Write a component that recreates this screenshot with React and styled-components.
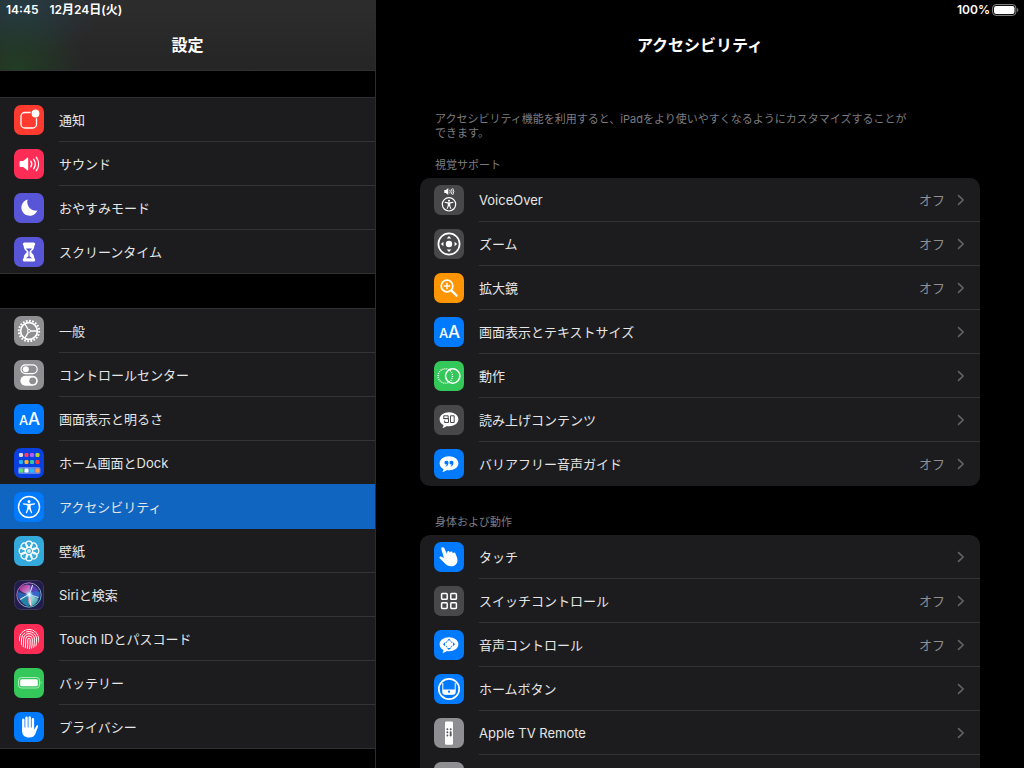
import React from 'react';
import styled, { createGlobalStyle } from 'styled-components';

const SIDEBAR_GROUPS = [
    [
        { id: 'notifications', label: '通知', icon: 'notifications' },
        { id: 'sounds', label: 'サウンド', icon: 'sounds' },
        { id: 'dnd', label: 'おやすみモード', icon: 'moon' },
        { id: 'screentime', label: 'スクリーンタイム', icon: 'hourglass' },
    ],
    [
        { id: 'general', label: '一般', icon: 'gear' },
        { id: 'control-center', label: 'コントロールセンター', icon: 'toggles' },
        { id: 'display', label: '画面表示と明るさ', icon: 'textSize' },
        { id: 'home', label: 'ホーム画面とDock', icon: 'dock' },
        { id: 'accessibility', label: 'アクセシビリティ', icon: 'accessibility' },
        { id: 'wallpaper', label: '壁紙', icon: 'wallpaper' },
        { id: 'siri', label: 'Siriと検索', icon: 'siri' },
        { id: 'touchid', label: 'Touch IDとパスコード', icon: 'fingerprint' },
        { id: 'battery', label: 'バッテリー', icon: 'battery' },
        { id: 'privacy', label: 'プライバシー', icon: 'hand' },
    ],
];

const SECTIONS = [
    {
        title: '視覚サポート',
        items: [
            { id: 'voiceover', label: 'VoiceOver', icon: 'voiceOver', value: 'オフ' },
            { id: 'zoom', label: 'ズーム', icon: 'zoom', value: 'オフ' },
            { id: 'magnifier', label: '拡大鏡', icon: 'magnifier', value: 'オフ' },
            { id: 'text-size', label: '画面表示とテキストサイズ', icon: 'textSize' },
            { id: 'motion', label: '動作', icon: 'motion' },
            { id: 'spoken', label: '読み上げコンテンツ', icon: 'spoken' },
            { id: 'audio-desc', label: 'バリアフリー音声ガイド', icon: 'quote', value: 'オフ' },
        ],
    },
    {
        title: '身体および動作',
        items: [
            { id: 'touch', label: 'タッチ', icon: 'touch' },
            { id: 'switch-control', label: 'スイッチコントロール', icon: 'switches', value: 'オフ' },
            { id: 'voice-control', label: '音声コントロール', icon: 'voiceControl', value: 'オフ' },
            { id: 'home-button', label: 'ホームボタン', icon: 'homeButton' },
            { id: 'tv-remote', label: 'Apple TV Remote', icon: 'remote' },
            { id: 'more', icon: 'more' },
        ],
    },
];

const ICON_COLORS = {
    notifications: '#ff3b30',
    sounds: '#ff2d55',
    moon: '#5856d6',
    hourglass: '#5856d6',
    gear: '#8e8e93',
    toggles: '#8e8e93',
    textSize: '#007aff',
    dock: '#0a3fe0',
    accessibility: '#007aff',
    wallpaper: '#34aadc',
    siri: '#211c4c',
    fingerprint: '#ff2d55',
    battery: '#34c759',
    hand: '#007aff',
    voiceOver: '#48484a',
    zoom: '#48484a',
    magnifier: '#ff9500',
    motion: '#34c759',
    spoken: '#48484a',
    quote: '#007aff',
    touch: '#007aff',
    switches: '#48484a',
    voiceControl: '#007aff',
    homeButton: '#007aff',
    remote: '#8e8e93',
    more: '#8e8e93',
};

const DOCK_ROWS = [
    { y: 7, colors: ['#d8d8e0', '#ff3b62', '#b65cf0', '#b4d62c'] },
    { y: 14, colors: ['#22b4f2', '#ffb224', '#35c8a2', '#ff3b30'] },
    { y: 22.6, colors: ['#5ce468', '#ffffff', '#22bdf5', '#ff9a3c'] },
];

const PERSON =
    'M15 8.1a1.5 1.5 0 1 0 0 3 1.5 1.5 0 0 0 0-3z' +
    'M9.3 11.2c-.7.1-.7 1.1 0 1.3l3.6.8c.4.1.5.3.5.8 0 2-.5 3.9-1.5 6.3-.3.8.7 1.2 1.1.5l2-4.2 2 4.2c.4.7 1.4.3 1.1-.5-1-2.4-1.5-4.3-1.5-6.3 0-.5.1-.7.5-.8l3.6-.8c.7-.2.7-1.2 0-1.3l-4 .5h-3.4z';

const BUBBLE =
    'M15 7.3c5.3 0 9.4 3 9.4 7s-4.1 7-9.4 7c-.8 0-1.5-.1-2.2-.2-1.1 1-2.6 1.8-4.4 2 .7-.8 1.1-1.9 1-3C7 18.9 5.6 16.8 5.6 14.3c0-4 4.1-7 9.4-7z';

const GLYPHS = {
    notifications: (
        <>
            <rect x="7" y="7.5" width="15.5" height="15.5" rx="3.8" fill="none" stroke="#fff" strokeWidth="1.3" />
            <circle cx="21.5" cy="8.5" r="5" fill="#ff3b30" />
            <circle cx="21.5" cy="8.5" r="3.9" fill="#fff" />
        </>
    ),
    sounds: (
        <>
            <path d="M6.5 12h2.7l4-3.2c.5-.4 1-.1 1 .5v11.4c0 .6-.5.9-1 .5l-4-3.2H6.5a1 1 0 0 1-1-1v-4a1 1 0 0 1 1-1z" fill="#fff" />
            <path d="M16.8 12.2a5 5 0 0 1 0 5.6M19.6 10.2a8.3 8.3 0 0 1 0 9.6M22.4 8.3a11.6 11.6 0 0 1 0 13.4" fill="none" stroke="#fff" strokeWidth="1.3" strokeLinecap="round" />
        </>
    ),
    moon: <path d="M13.7 6.4A8.3 8.3 0 1 0 23.4 17.5 8.6 8.6 0 0 1 13.7 6.4z" fill="#fff" />,
    hourglass: (
        <>
            <path d="M10.4 5.4h9.2a1.6 1.6 0 0 1 1.6 1.6c0 1-.5 1.4-.9 1.7 0 3-1.3 4.3-2.7 5.6-.5.5-.5.9 0 1.4 1.4 1.3 2.7 2.6 2.7 5.6.4.3.9.7.9 1.7a1.6 1.6 0 0 1-1.6 1.6h-9.2A1.6 1.6 0 0 1 8.8 23c0-1 .5-1.4.9-1.7 0-3 1.3-4.3 2.7-5.6.5-.5.5-.9 0-1.4-1.4-1.3-2.7-2.6-2.7-5.6-.4-.3-.9-.7-.9-1.7a1.6 1.6 0 0 1 1.6-1.6z" fill="#fff" />
            <path d="M12 11.6h6c-.6 1.2-1.7 1.8-2.5 2.8v4.8l2.7 2h-6.4l2.7-2v-4.8c-.8-1-1.9-1.6-2.5-2.8z" fill="#5856d6" />
        </>
    ),
    gear: (
        <g fill="none" stroke="#fff">
            <circle cx="15" cy="15" r="8.4" strokeWidth="1.7" />
            <circle cx="15" cy="15" r="10.2" strokeWidth="2" pathLength="40" strokeDasharray="1.1 .9" />
            <path d="M16.6 15h6.6M14.2 13.6 11 8M14.2 16.4 11 22" strokeWidth="1.3" />
            <circle cx="15" cy="15" r="1.5" strokeWidth="1" />
        </g>
    ),
    toggles: (
        <>
            <rect x="7" y="4.8" width="16.2" height="8.8" rx="4.4" fill="none" stroke="#fff" strokeWidth="1.2" />
            <circle cx="11.8" cy="9.2" r="3" fill="#fff" />
            <rect x="6.4" y="15.8" width="17.4" height="10" rx="5" fill="#fff" />
            <circle cx="18.7" cy="20.8" r="3.4" fill="#8e8e93" />
        </>
    ),
    textSize: (
        <g fontFamily="Inter" fontWeight="500" fill="#fff">
            <text x="5" y="21" fontSize="13">A</text>
            <text x="14" y="21" fontSize="17">A</text>
        </g>
    ),
    dock: (
        <>
            <rect x="4" y="19" width="22.5" height="7" rx="1.8" fill="#fff" fillOpacity=".35" />
            {DOCK_ROWS.map(row =>
                row.colors.map((color, i) => (
                    <rect key={color} x={5 + i * 5.5} y={row.y - 2} width="4" height="4" rx="1.2" fill={color} />
                ))
            )}
        </>
    ),
    accessibility: (
        <>
            <circle cx="15" cy="15" r="10.5" fill="none" stroke="#fff" strokeWidth="1.5" />
            <path d={PERSON} fill="#fff" />
        </>
    ),
    wallpaper: (
        <g fill="none" stroke="#fff" strokeWidth="1.2">
            {[0, 45, 90, 135, 180, 225, 270, 315].map(angle => (
                <circle key={angle} cx="15" cy="8.3" r="3.1" transform={`rotate(${angle} 15 15)`} />
            ))}
            <circle cx="15" cy="15" r="3.6" />
            <circle cx="15" cy="15" r="2" fill="#fff" fillOpacity=".8" stroke="none" />
        </g>
    ),
    siri: (
        <>
            <defs>
                <linearGradient id="siri-ring" x1="0" y1="0" x2="1" y2="1">
                    <stop offset="0" stopColor="#d24bb4" />
                    <stop offset=".5" stopColor="#8aa0b8" />
                    <stop offset="1" stopColor="#35c8c0" />
                </linearGradient>
                <linearGradient id="siri-pink" x1="1" y1="1" x2="0" y2="0">
                    <stop offset="0" stopColor="#f0b8e8" />
                    <stop offset="1" stopColor="#c0249a" stopOpacity=".7" />
                </linearGradient>
                <linearGradient id="siri-teal" x1="0" y1="0" x2="1" y2="1">
                    <stop offset="0" stopColor="#d0fff4" />
                    <stop offset="1" stopColor="#18b8b4" stopOpacity=".7" />
                </linearGradient>
                <radialGradient id="siri-core">
                    <stop offset="0" stopColor="#fff" />
                    <stop offset=".4" stopColor="#b8f0ff" stopOpacity=".8" />
                    <stop offset="1" stopColor="#4090e0" stopOpacity="0" />
                </radialGradient>
            </defs>
            <rect x=".5" y=".5" width="29" height="29" rx="6.5" fill="none" stroke="#3c3a5c" />
            <circle cx="15" cy="15" r="12.2" fill="#352a6e" stroke="url(#siri-ring)" strokeWidth="1" />
            <path d="M15.5 15C12 13.5 6 12 5.5 8.5 8 4 14 4 17 6z" fill="url(#siri-pink)" />
            <path d="M15.5 15 16 5.5c3-.5 6.5 1.5 8.5 5z" fill="#5a3fb4" />
            <path d="M15.5 14.5c3-3 7-4.5 10-2.5.5 3 0 5-1 6.5z" fill="#3767c8" />
            <path d="M14.5 15 4.5 12c-1.2 4 0 7 2 9z" fill="#2a62b0" />
            <path d="M15 14.5 6.5 19.5c1.5 4 4.5 6 8.5 6.7z" fill="#1f86a6" />
            <path d="M15.5 14.5 24.5 19c-1.5 4-4 6-7.5 7.2z" fill="url(#siri-teal)" />
            <path d="M15 14c2 4 3 9 1.8 12.4-2.6-2-3.2-7-1.8-12.4z" fill="#f08fb0" />
            <path d="M6.5 19.3 15 14.3l9 3.2M15 14l1.8 11M18.5 5.5 15.5 14" fill="none" stroke="#fff" strokeWidth="1.1" strokeLinecap="round" strokeOpacity=".8" />
            <circle cx="15.2" cy="14.5" r="4.5" fill="url(#siri-core)" />
        </>
    ),
    fingerprint: (
        <>
            <clipPath id="finger-clip">
                <circle cx="15" cy="15" r="10.2" />
            </clipPath>
            <g clipPath="url(#finger-clip)" fill="none" stroke="#fff" strokeWidth="1" strokeLinecap="round">
                <path d="M5.3 17v-2a9.7 9.7 0 0 1 19.4 0v4" />
                <path d="M7.3 21c.3-2 .2-4 .2-6a7.5 7.5 0 0 1 3.3-6.2M12.5 7.9A7.5 7.5 0 0 1 22.5 15c0 2.5 0 4.5-.5 7" />
                <path d="M9.2 23c.5-2.5.4-5 .4-8a5.4 5.4 0 0 1 10.8 0c0 3-.1 5.5-.6 8.5" />
                <path d="M11.2 24.5c.6-3 .5-6 .5-9.3a3.3 3.3 0 0 1 6.6 0c0 3.5-.1 6-.7 9.3" />
                <path d="M13.3 25.2c.6-3.2.5-6.5.5-9.7a1.2 1.2 0 0 1 2.4 0c0 3.5-.1 6.5-.7 9.7" />
            </g>
        </>
    ),
    battery: (
        <>
            <rect x="4.5" y="9.5" width="21" height="10.5" rx="3" fill="none" stroke="#fff" strokeOpacity=".6" strokeWidth="1" />
            <rect x="6.2" y="11.2" width="17.6" height="7.1" rx="1.5" fill="#fff" />
            <path d="M26.7 13c1.2.6 1.2 2.8 0 3.4z" fill="#fff" fillOpacity=".6" />
        </>
    ),
    hand: (
        <>
            <path d="M8 15.5h12.2v2.2l2.3-4c.5-.8 1.9-.4 1.6.7l-2.4 6.6c-1 3-3 4.6-6.5 4.6-4.6 0-7.2-2.6-7.2-7z" fill="#fff" />
            <path d="M9.3 17V7.8M12.5 17V5.7M15.7 17V5.5M18.9 17V7.3" fill="none" stroke="#fff" strokeWidth="2.4" strokeLinecap="round" />
        </>
    ),
    voiceOver: (
        <>
            <path d="M10.3 5.1h1.5L14.3 3.1v7l-2.5-2h-1.5z" fill="#fff" />
            <path d="M15.9 5.2a2.5 2.5 0 0 1 0 2.8M17.4 4.3a4 4 0 0 1 0 4.6M18.9 3.5a5.5 5.5 0 0 1 0 6.2" fill="none" stroke="#fff" strokeWidth=".9" strokeLinecap="round" />
            <circle cx="15" cy="19.3" r="6.7" fill="none" stroke="#fff" strokeWidth="1.2" />
            <g transform="translate(4.2 8.8) scale(.72)">
                <path d={PERSON} fill="#fff" />
            </g>
        </>
    ),
    zoom: (
        <>
            <circle cx="15" cy="15" r="10.6" fill="none" stroke="#fff" strokeWidth="1.7" />
            <circle cx="15" cy="15" r="3.2" fill="#fff" />
            <path d="M15 6.9l2.3 2.5h-4.6zM15 23.1l2.3-2.5h-4.6zM6.9 15l2.5-2.3v4.6zM23.1 15l-2.5-2.3v4.6z" fill="#fff" />
        </>
    ),
    magnifier: (
        <g fill="none" stroke="#fff" strokeLinecap="round">
            <circle cx="13" cy="13" r="5.8" strokeWidth="1.7" />
            <path d="M13 10.3v5.4M10.3 13h5.4" strokeWidth="1.4" />
            <path d="M17.6 17.6l5 5" strokeWidth="2.2" />
        </g>
    ),
    motion: (
        <g fill="none" stroke="#fff">
            <circle cx="11.3" cy="15" r="7.2" strokeWidth="1.3" pathLength="44" strokeDasharray="1.1 .9" />
            <circle cx="18.7" cy="15" r="7.2" strokeWidth="1.5" />
        </g>
    ),
    spoken: (
        <>
            <path d={BUBBLE} fill="#fff" />
            <path d="M9.8 10.8h4.4v2.8H9.8zM9.3 13.6h5.2v3.9h-3.8v-2M16.5 10.8h3.7v6.7h-3.7z" fill="none" stroke="#48484a" strokeWidth="1" />
        </>
    ),
    quote: (
        <>
            <path d={BUBBLE} fill="#fff" />
            <path d="M12.6 11.7a1.9 1.9 0 0 1 1.9 2c0 1.8-.9 3.2-2.6 3.7-.5.1-.6-.4-.2-.6.7-.4 1.1-.9 1.2-1.4A1.9 1.9 0 1 1 12.6 11.7zM17.6 11.7a1.9 1.9 0 0 1 1.9 2c0 1.8-.9 3.2-2.6 3.7-.5.1-.6-.4-.2-.6.7-.4 1.1-.9 1.2-1.4A1.9 1.9 0 1 1 17.6 11.7z" fill="#007aff" />
        </>
    ),
    touch: (
        <path d="M8.2 5.3c.8-.4 1.7 0 2 .7l2.8 6 .2-1.9c.2-1.3 2-1.4 2.4-.2l.3.9c.1-1.5 2.2-1.7 2.7-.3l.3.9c.3-1.3 2.2-1.3 2.6.1.7 2.2 2 4.3 2 6.9 0 3.4-2.9 5.9-6.5 5.9-3 0-4.8-1.4-6.5-3.2L5.7 16.3c-.8-.9.2-2.2 1.4-1.8l2.9 1.4L7.3 7.2c-.3-.8.1-1.6.9-1.9z" fill="#fff" />
    ),
    switches: (
        <g fill="none" stroke="#fff" strokeWidth="1.5">
            <rect x="7.6" y="7.6" width="5.6" height="5.6" rx=".8" />
            <rect x="16.8" y="7.6" width="5.6" height="5.6" rx=".8" />
            <rect x="7.6" y="16.8" width="5.6" height="5.6" rx=".8" />
            <rect x="16.8" y="16.8" width="5.6" height="5.6" rx=".8" />
        </g>
    ),
    voiceControl: (
        <>
            <path d={BUBBLE} fill="#fff" />
            <path d="M15 8.7l2 1.9h-4zM15 19.9l2-1.9h-4zM9 14.3l2-2v4zM21 14.3l-2-2v4z" fill="#007aff" />
            <path d="M11.9 12.9c.2-.8.7-1.3 1.5-1.5M16.6 11.4c.8.2 1.3.7 1.5 1.5M18.1 15.7c-.2.8-.7 1.3-1.5 1.5M13.4 17.2c-.8-.2-1.3-.7-1.5-1.5" fill="none" stroke="#007aff" strokeWidth="1" />
        </>
    ),
    homeButton: (
        <>
            <circle cx="15" cy="15" r="10.2" fill="none" stroke="#fff" strokeWidth="1.7" />
            <path d="M8.8 9v9.5a1.8 1.8 0 0 0 1.8 1.8h8.8a1.8 1.8 0 0 0 1.8-1.8V9" fill="none" stroke="#fff" strokeWidth="1" />
            <path d="M8.8 15.5h12.4v3a1.8 1.8 0 0 1-1.8 1.8h-8.8a1.8 1.8 0 0 1-1.8-1.8z" fill="#fff" />
            <circle cx="15" cy="17.7" r="1.1" fill="#007aff" />
        </>
    ),
    remote: (
        <>
            <rect x="11" y="3.5" width="8" height="23.2" rx="1.3" fill="#fff" />
            <path d="M13.4 11.2v.1M16.7 11.2v.1M13.4 14.3v.1M16.7 14.3v.1M13.4 17.4v.1M16.7 15.5v2" fill="none" stroke="#55555a" strokeWidth="1.9" strokeLinecap="round" />
        </>
    ),
};

function SettingIcon({ name }) {
    return (
        <IconTile $color={ICON_COLORS[name]} viewBox="0 0 30 30" aria-hidden="true">
            {GLYPHS[name]}
        </IconTile>
    );
}

function SidebarItem({ item, isSelected }) {
    return (
        <SidebarRow href={`#${item.id}`} $selected={isSelected} aria-current={isSelected ? 'page' : undefined}>
            <SettingIcon name={item.icon} />
            <RowBody>
                <RowLabel>{item.label}</RowLabel>
            </RowBody>
        </SidebarRow>
    );
}

function SettingItem({ item }) {
    return (
        <CardRow href={`#${item.id}`}>
            <SettingIcon name={item.icon} />
            <RowBody>
                <RowLabel>{item.label}</RowLabel>
                {item.value && <RowValue>{item.value}</RowValue>}
                <Chevron viewBox="0 0 8 12" aria-hidden="true">
                    <path d="M1.5 1.6 6.2 6l-4.7 4.4" />
                </Chevron>
            </RowBody>
        </CardRow>
    );
}

function App() {
    return (
        <Page>
            <GlobalStyle />
            <Sidebar>
                <SidebarHeader>
                    <StatusBar>
                        <span>14:45</span>
                        <span>12月24日(火)</span>
                    </StatusBar>
                    <Title>設定</Title>
                </SidebarHeader>
                <nav>
                    {SIDEBAR_GROUPS.map(group => (
                        <SidebarGroup key={group[0].id}>
                            {group.map(item => (
                                <SidebarItem key={item.id} item={item} isSelected={item.id === 'accessibility'} />
                            ))}
                        </SidebarGroup>
                    ))}
                </nav>
            </Sidebar>
            <Main>
                <MainHeader>
                    <StatusBar $end>
                        <span>100%</span>
                        <BatteryLevel viewBox="0 0 27 12" aria-hidden="true">
                            <rect x=".6" y=".6" width="23.3" height="10.8" rx="3.4" fill="none" stroke="#8a8a8a" />
                            <rect x="2" y="2" width="20.5" height="8" rx="2.2" fill="#fff" />
                            <path d="M25.2 4c1.6.6 1.6 3.4 0 4z" fill="#8a8a8a" />
                        </BatteryLevel>
                    </StatusBar>
                    <Title>アクセシビリティ</Title>
                </MainHeader>
                <Content>
                    <Description>
                        アクセシビリティ機能を利用すると、iPadをより使いやすくなるようにカスタマイズすることが
                        <br />
                        できます。
                    </Description>
                    {SECTIONS.map(section => (
                        <Section key={section.title}>
                            <SectionTitle>{section.title}</SectionTitle>
                            <Card>
                                {section.items.map(item => (
                                    <SettingItem key={item.id} item={item} />
                                ))}
                            </Card>
                        </Section>
                    ))}
                </Content>
            </Main>
        </Page>
    );
}

export default App;

const GlobalStyle = createGlobalStyle`
    * {
        box-sizing: border-box;
    }

    body {
        margin: 0;
        background-color: #000;
        color: #e6e6e6;
        font-family: Inter, "Noto Sans CJK JP", sans-serif;
        font-size: 13px;
    }
`;

const Page = styled.div`
    display: flex;
    height: 100vh;
    overflow: hidden;
`;

const Sidebar = styled.aside`
    flex: 0 0 376px;
    border-right: 1px solid #2c2c2e;
    overflow: hidden;
`;

const SidebarHeader = styled.header`
    height: 71px;
    border-bottom: 1px solid #303032;
    background:
        radial-gradient(ellipse 70px 60px at 16px 70px, rgba(32, 72, 36, 0.7), transparent),
        radial-gradient(ellipse 80px 50px at 20px 8px, rgba(34, 66, 76, 0.7), transparent),
        linear-gradient(#2d2d2e, #252526);
`;

const StatusBar = styled.div`
    display: flex;
    align-items: center;
    justify-content: ${props => (props.$end ? 'flex-end' : 'flex-start')};
    gap: ${props => (props.$end ? '2px' : '11px')};
    height: 20px;
    padding: 0 5px 0 6px;
    color: #fff;
    font-size: 12px;
    font-weight: 600;
    line-height: 20px;
`;

const BatteryLevel = styled.svg`
    width: 27px;
    height: 12px;
`;

const Title = styled.h1`
    margin: 0;
    color: #fff;
    font-size: 16px;
    font-weight: 700;
    line-height: 50px;
    text-align: center;
`;

const SidebarGroup = styled.div`
    margin-top: 34px;
    border-top: 1px solid #303032;
    background-color: #1c1c1e;

    &:first-child {
        margin-top: 26px;
    }
`;

const IconTile = styled.svg`
    flex: none;
    width: 30px;
    height: 30px;
    border-radius: 7px;
    background-color: ${props => props.$color};
`;

const RowBody = styled.div`
    display: flex;
    flex: 1;
    align-items: center;
    height: 44px;
    border-bottom: 1px solid #343436;
`;

const RowLabel = styled.span`
    flex: 1;
    line-height: 14px;
    white-space: nowrap;
`;

const RowValue = styled.span`
    margin-right: 12px;
    color: #8e8e93;
    line-height: 14px;
`;

const Chevron = styled.svg`
    width: 8px;
    height: 12px;
    margin-right: 15px;
    fill: none;
    stroke: #636368;
    stroke-width: 1.6;
    stroke-linecap: round;
    stroke-linejoin: round;
`;

const Row = styled.a`
    display: flex;
    align-items: center;
    gap: 15px;
    padding-left: 14px;
    color: inherit;
    text-decoration: none;
`;

const SidebarRow = styled(Row)`
    position: relative;
    background-color: ${props => (props.$selected ? '#1065c0' : 'transparent')};
    box-shadow: ${props => (props.$selected ? '0 -1px 0 #1065c0' : 'none')};

    ${RowBody} {
        border-color: ${props => (props.$selected ? 'transparent' : '#343436')};
    }

    &:last-child {
        border-bottom: 1px solid #303032;
    }

    &:last-child ${RowBody} {
        height: 43px;
        border-bottom: none;
    }
`;

const CardRow = styled(Row)`
    &:last-child ${RowBody} {
        border-bottom: none;
    }
`;

const Main = styled.main`
    flex: 1;
    min-width: 0;
    overflow: hidden;
`;

const MainHeader = styled.header`
    height: 71px;
`;

const Content = styled.div`
    padding: 41px 44px 0;
`;

const Description = styled.p`
    margin: 0 0 18px;
    padding: 0 15px;
    color: #7c7c81;
    font-size: 11px;
    line-height: 14px;
`;

const Section = styled.section`
    margin-bottom: 29px;
`;

const SectionTitle = styled.h2`
    margin: 0 0 6px;
    padding: 0 15px;
    color: #7c7c81;
    font-size: 11px;
    font-weight: 400;
    line-height: 14px;
`;

const Card = styled.div`
    border-radius: 10px;
    background-color: #1c1c1e;
    overflow: hidden;
`;
